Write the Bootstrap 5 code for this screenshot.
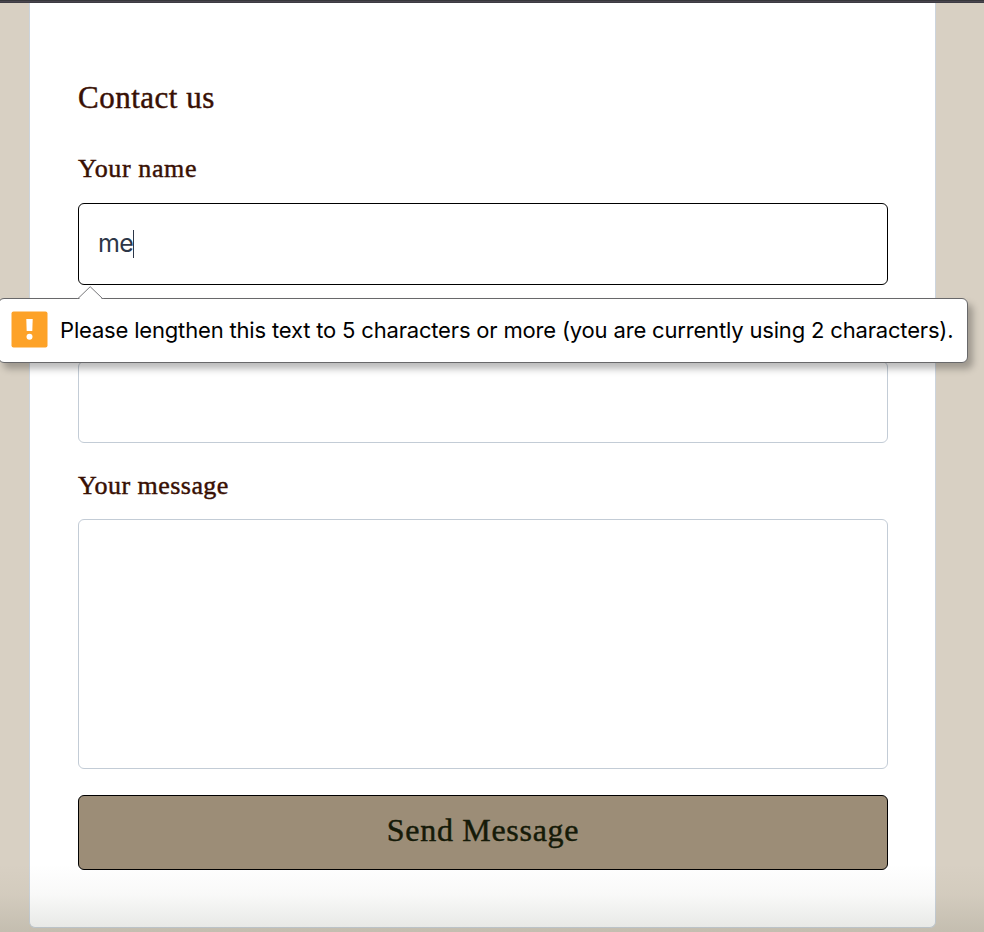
<!DOCTYPE html>
<html lang="en">
<head>
<meta charset="utf-8">
<meta name="viewport" content="width=device-width, initial-scale=1">
<title>Contact us</title>
<link href="https://cdn.jsdelivr.net/npm/bootstrap@5.3.0/dist/css/bootstrap.min.css" rel="stylesheet">
<style>
body{background:#d8d0c3;height:932px;overflow:hidden;font-family:Inter,sans-serif}
.top-strip{height:3px;background:linear-gradient(#37373b 0 1px,#49454e 1px 2px,#3d3b43 2px)}
.panel{width:907px;height:925px;margin-left:29px;padding:0 48px;border:1px solid #ccd4dd;border-top:0;border-radius:0 0 6px 6px}
.serif{font-family:"Liberation Serif",serif;color:#381004;-webkit-text-stroke:.45px currentColor;white-space:nowrap}
.title{font-size:31px;line-height:40px;letter-spacing:.5px;margin:75px 0 0}
.field-label{font-size:26px;line-height:32px;letter-spacing:.6px}
.label-name{margin-top:35px;margin-bottom:18px}
.label-message{margin-top:27px;margin-bottom:17px;letter-spacing:.45px}
.field{width:810px;border:1px solid #c3ccd6;border-radius:6px;padding:0 20px;color:#2d3748;resize:none;box-shadow:none}
.field-name{height:82px;border-color:#000;font-size:25px;padding-left:19px;letter-spacing:-.7px}
.field-mail{height:82px;margin-top:76px}
.field-message{height:250px}
.caret{width:1px;height:28px;background:#2d3748}
.send{width:810px;height:75px;margin-top:26px;background:#9c8d77;border:1px solid #000;border-radius:6px;padding:0 0 5px;font-size:32px;letter-spacing:.7px;color:#151a08}
.send:hover{background:#9c8d77;border-color:#000;color:#151a08}
.hint{left:-2px;top:298px;width:970px;height:65px;padding-left:12px;border:1px solid #68686a;border-radius:6px;background:#fff;color:#000;box-shadow:5px 6px 7px rgba(0,0,0,.27)}
.hint-arrow{left:78px;top:-13px}
.hint-text{margin-left:12px;font-size:22px;letter-spacing:-.175px;white-space:nowrap}
.hint-icon{margin-top:-2px}
.fade-bottom{left:0;right:0;top:864px;height:68px;background:linear-gradient(rgba(60,65,30,0),rgba(60,65,35,.03) 45%,rgba(60,65,45,.13));pointer-events:none}
</style>
<script src="https://cdn.jsdelivr.net/npm/bootstrap@5.3.0/dist/js/bootstrap.bundle.min.js"></script>
</head>
<body class="position-relative m-0">
<div class="top-strip"></div>
<main class="panel bg-white">
  <form class="d-flex flex-column align-items-start" novalidate>
    <h1 class="title serif fw-normal">Contact us</h1>
    <label class="field-label label-name serif">Your name</label>
    <div class="form-control field field-name d-flex align-items-center"><span class="typed">me</span><span class="caret"></span></div>
    <input class="form-control field field-mail" type="email" aria-label="Email">
    <label class="field-label label-message serif" for="message">Your message</label>
    <textarea class="form-control field field-message" id="message"></textarea>
    <button class="btn send serif" type="button">Send Message</button>
  </form>
</main>
<div class="fade-bottom position-absolute"></div>
<div class="hint position-absolute d-flex align-items-center" role="alert">
  <svg class="hint-arrow position-absolute" width="28" height="14" viewBox="0 0 28 14"><path d="M1 14 L13.5 1 L26 14Z" fill="#fff"/><path d="M0 12.5 L1 12.5 L13.2 .7 L25.5 12.5 L27 12.5" fill="none" stroke="#77777a"/></svg>
  <svg class="hint-icon flex-shrink-0" width="37" height="37" viewBox="0 0 37 37"><rect x=".5" y=".5" width="36" height="36" rx="2" fill="#fda228"/><path d="M15.3 8h6.4l-.4 12h-5.6z" fill="#fff"/><circle cx="18.5" cy="25.8" r="3" fill="#fff"/></svg>
  <span class="hint-text">Please lengthen this text to 5 characters or more (you are currently using 2 characters).</span>
</div>
</body>
</html>
